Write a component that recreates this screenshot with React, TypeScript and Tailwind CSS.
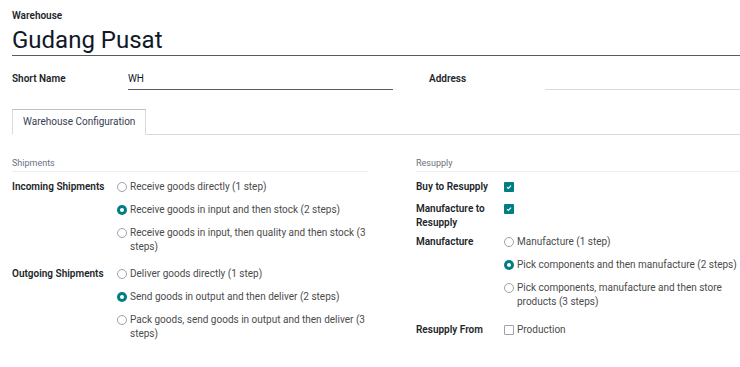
import React from 'react';

const Radio: React.FC<{ checked?: boolean }> = ({ checked }) =>
    checked ? (
        <span className="mt-[2px] flex h-[10px] w-[10px] shrink-0 items-center justify-center rounded-full bg-[#017e84]">
            <span className="h-[4px] w-[4px] rounded-full bg-white" />
        </span>
    ) : (
        <span className="mt-[2px] h-[10px] w-[10px] shrink-0 rounded-full border border-[#9ca3af] bg-white" />
    );

const Check: React.FC<{ checked?: boolean }> = ({ checked }) =>
    checked ? (
        <span className="mt-[2px] flex h-[10px] w-[10px] shrink-0 items-center justify-center rounded-[1px] bg-[#017e84]">
            <svg viewBox="0 0 10 10" className="h-[8px] w-[8px]">
                <path d="M2.5 5.2 L4.2 6.8 L7.5 3.4" fill="none" stroke="white" strokeWidth="1.4" />
            </svg>
        </span>
    ) : (
        <span className="mt-[2px] h-[10px] w-[10px] shrink-0 rounded-[1px] border border-[#9ca3af] bg-white" />
    );

const Option: React.FC<{ checked?: boolean; children: React.ReactNode }> = ({ checked, children }) => (
    <div className="flex items-start gap-[3px]">
        <Radio checked={checked} />
        <span className="text-[#4b4b4b]">{children}</span>
    </div>
);

export default function App() {
    return (
        <div className="min-h-screen bg-white pl-3 text-[10px] leading-[14px] text-[#212529]" style={{ fontFamily: 'Roboto, "Noto Sans", sans-serif' }}>
            <div className="pt-[10px]">
                <div className="text-[10px] font-semibold leading-[12px] text-[#212529]">Warehouse</div>
                <div className="mt-[3px] h-[31px] border-b border-[#545b66] text-[24px] leading-[30px] text-[#111827]">Gudang Pusat</div>
            </div>

            <div className="mt-[15px] grid grid-cols-[381px_1fr] gap-[36px]">
                <div className="flex items-end">
                    <div className="mb-[3px] w-[116px] font-semibold leading-[16px]">Short Name</div>
                    <div className="h-[19px] flex-1 border-b border-[#545b66] leading-[16px] text-[#111827]">WH</div>
                </div>
                <div className="flex items-end">
                    <div className="mb-[3px] w-[116px] font-semibold leading-[16px]">Address</div>
                    <div className="h-[19px] flex-1 border-b border-[#d8dadd]" />
                </div>
            </div>

            <div className="mt-[19px] flex border-b border-[#d8dadd]">
                <div className="-mb-px flex h-[26px] items-center border border-b-white border-[#d8dadd] border-t-[#c9bcca] bg-white px-[10px] text-[#374151]">
                    Warehouse Configuration
                </div>
            </div>

            <div className="mt-[22px] grid grid-cols-[356px_1fr] gap-[48px]">
                <div>
                    <div className="border-b border-[#eceef0] pb-[2px] text-[9px] leading-[12px] text-[#6b7280]">Shipments</div>
                    <div className="mt-[8px] flex">
                        <div className="w-[105px] shrink-0 font-semibold">Incoming Shipments</div>
                        <div className="flex flex-col gap-[9px]">
                            <Option>Receive goods directly (1 step)</Option>
                            <Option checked>Receive goods in input and then stock (2 steps)</Option>
                            <Option>Receive goods in input, then quality and then stock (3 steps)</Option>
                        </div>
                    </div>
                    <div className="mt-[13px] flex">
                        <div className="w-[105px] shrink-0 font-semibold">Outgoing Shipments</div>
                        <div className="flex flex-col gap-[9px]">
                            <Option>Deliver goods directly (1 step)</Option>
                            <Option checked>Send goods in output and then deliver (2 steps)</Option>
                            <Option>Pack goods, send goods in output and then deliver (3 steps)</Option>
                        </div>
                    </div>
                </div>

                <div>
                    <div className="border-b border-[#eceef0] pb-[2px] text-[9px] leading-[12px] text-[#6b7280]">Resupply</div>
                    <div className="mt-[8px] flex">
                        <div className="w-[88px] shrink-0 font-semibold">Buy to Resupply</div>
                        <Check checked />
                    </div>
                    <div className="mt-[8px] flex">
                        <div className="w-[88px] shrink-0 font-semibold">Manufacture to Resupply</div>
                        <Check checked />
                    </div>
                    <div className="mt-[5px] flex">
                        <div className="w-[88px] shrink-0 font-semibold">Manufacture</div>
                        <div className="flex flex-col gap-[9px]">
                            <Option>Manufacture (1 step)</Option>
                            <Option checked>Pick components and then manufacture (2 steps)</Option>
                            <Option>Pick components, manufacture and then store products (3 steps)</Option>
                        </div>
                    </div>
                    <div className="mt-[14px] flex">
                        <div className="w-[88px] shrink-0 font-semibold">Resupply From</div>
                        <div className="flex items-start gap-[3px]">
                            <Check />
                            <span className="text-[#4b4b4b]">Production</span>
                        </div>
                    </div>
                </div>
            </div>
        </div>
    );
}
